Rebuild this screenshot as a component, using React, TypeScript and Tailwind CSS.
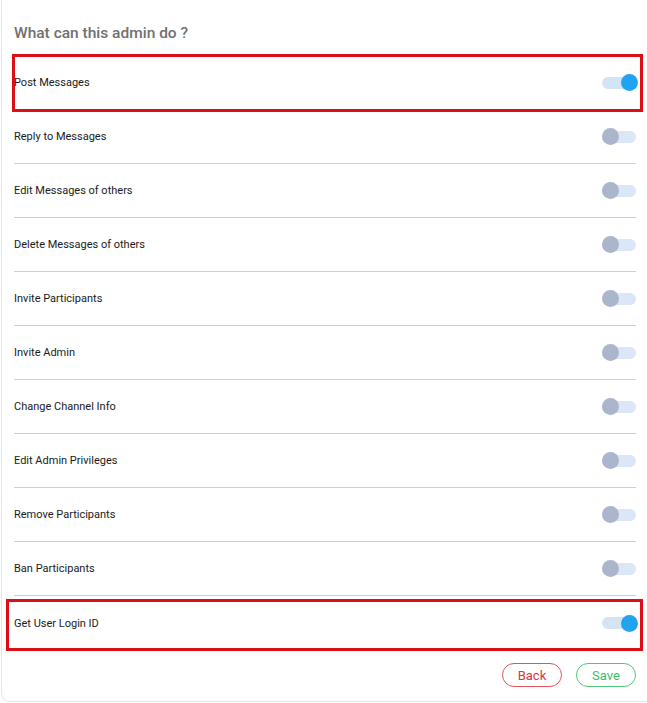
import React from "react";

const rows: { label: string; on: boolean }[] = [
  { label: "Post Messages", on: true },
  { label: "Reply to Messages", on: false },
  { label: "Edit Messages of others", on: false },
  { label: "Delete Messages of others", on: false },
  { label: "Invite Participants", on: false },
  { label: "Invite Admin", on: false },
  { label: "Change Channel Info", on: false },
  { label: "Edit Admin Privileges", on: false },
  { label: "Remove Participants", on: false },
  { label: "Ban Participants", on: false },
  { label: "Get User Login ID", on: true },
];

function Toggle({ on }: { on: boolean }) {
  return (
    <div className="relative w-[34px] h-[17px] flex items-center">
      <div className={"w-[34px] h-[12px] rounded-full " + (on ? "bg-[#d3e4f5]" : "bg-[#dbe7f6]")} />
      {on ? (
        <div className="absolute right-[-2px] top-0 w-[17px] h-[17px] rounded-full bg-[#22a3f2]" />
      ) : (
        <div className="absolute left-0 top-0 w-[17px] h-[17px] rounded-full bg-[#abb5cc]" />
      )}
    </div>
  );
}

export default function App() {
  return (
    <div className="w-[647px] h-[703px] overflow-hidden bg-white" style={{ fontFamily: "Roboto, 'Liberation Sans', sans-serif" }}>
      <div className="relative ml-[1px] -mt-[10px] w-[700px] h-[712px] border-l border-b border-[#e6e6e6] rounded-bl-[9px] bg-white">
        <div className="w-[646px] pl-[12px] pr-[12px]">
          <div className="pt-[33px] h-[66px] text-[15.5px] font-medium text-[#707070] leading-[20px]">
            What can this admin do ?
          </div>
          {rows.map((r, i) => (
            <div
              key={r.label}
              className={
                "h-[54px] flex items-center justify-between " +
                (i < rows.length - 1 ? "border-b border-[#cfcfcf]" : "")
              }
            >
              <span className="mt-[2px] text-[11px] text-[#1a1a1a]">{r.label}</span>
              <Toggle on={r.on} />
            </div>
          ))}
          <div className="flex justify-end gap-[14px] pt-[13px]">
            <button className="w-[60px] h-[24px] rounded-full border border-[#e0555c] text-[#d9363e] text-[13px] leading-none bg-white">
              Back
            </button>
            <button className="w-[60px] h-[24px] rounded-full border border-[#4cc97a] text-[#3dbb6a] text-[13px] leading-none bg-white">
              Save
            </button>
          </div>
        </div>
        <div className="absolute left-[10px] top-[64px] w-[631px] h-[58px] border-[3px] border-[#dd0f16] pointer-events-none" />
        <div className="absolute left-[4px] top-[609px] w-[637px] h-[52px] border-[3px] border-[#dd0f16] pointer-events-none" />
      </div>
    </div>
  );
}
